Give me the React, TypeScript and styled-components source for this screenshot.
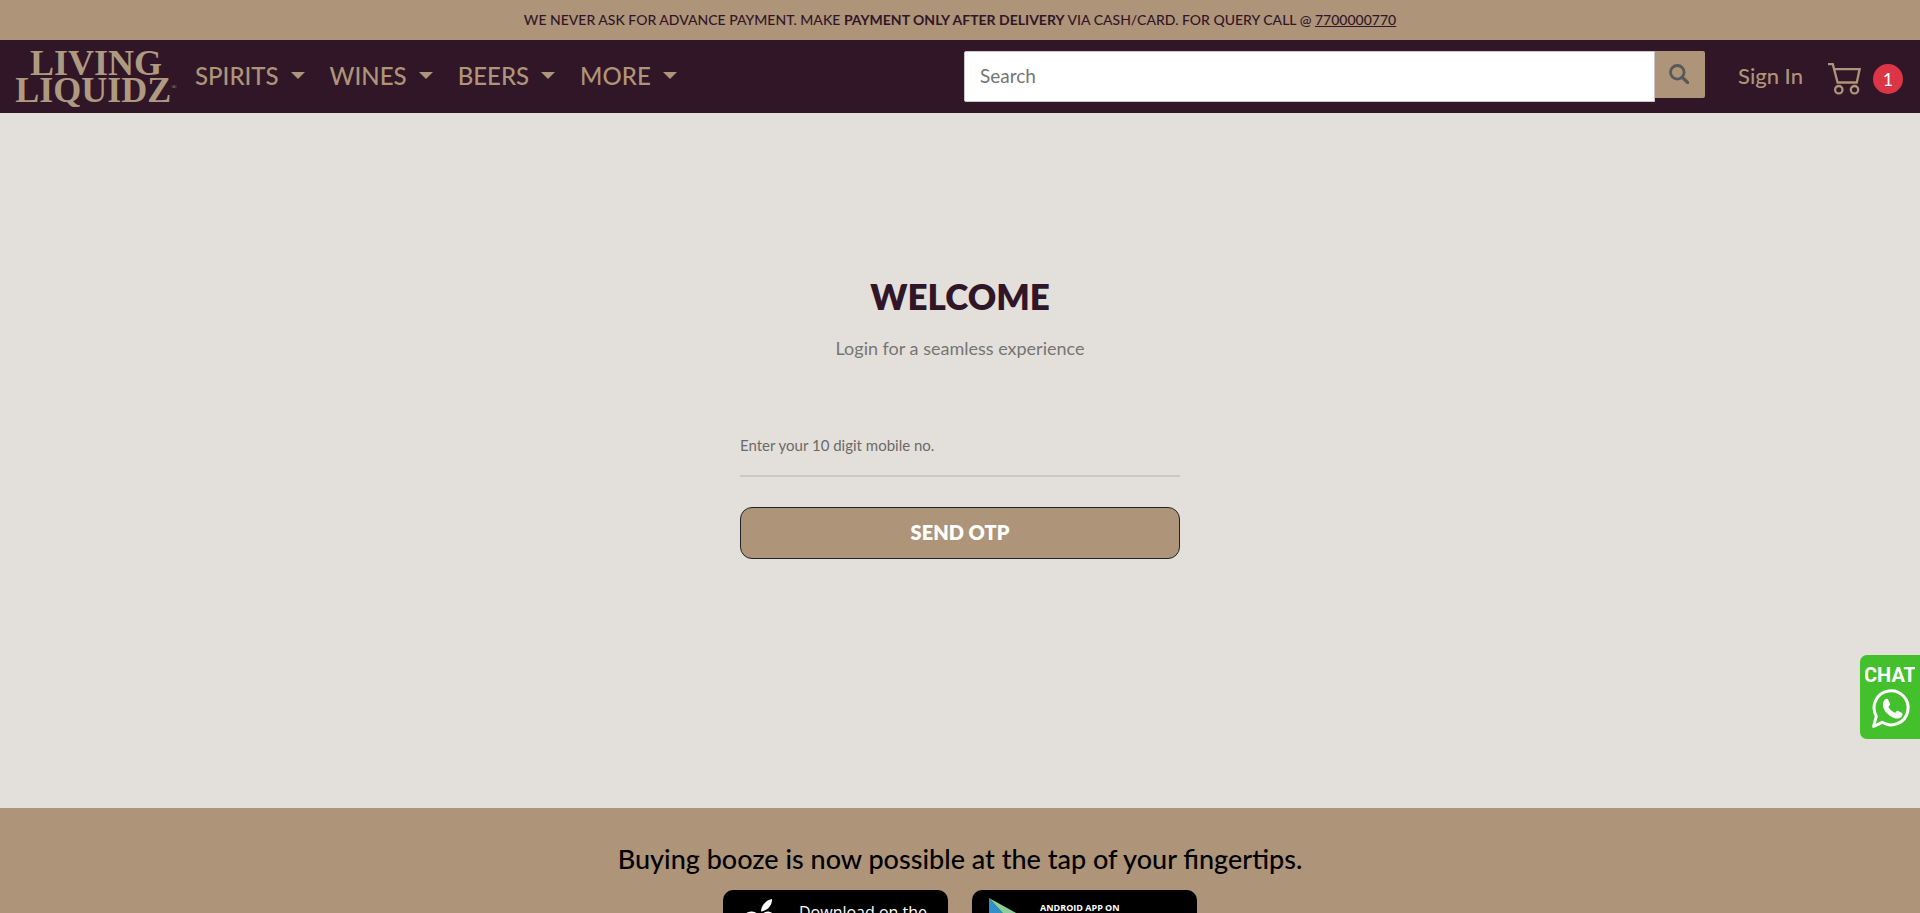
import React from 'react';
import styled, { createGlobalStyle } from 'styled-components';

const plum = '#311628';
const tan = '#ae9478';
const sand = '#e3e0db';

const GlobalStyle = createGlobalStyle`
  *, *::before, *::after { box-sizing: border-box; }
  body {
    margin: 0;
    background: ${sand};
    font-family: Lato, "Open Sans", sans-serif;
    font-size: 16px;
    color: #212529;
  }
  button, input { font-family: inherit; }
`;

const Page = styled.div`
  display: flex;
  flex-direction: column;
  height: 100vh;
  overflow: hidden;
`;

const Notice = styled.p`
  flex: none;
  margin: 0;
  padding: 0 16px;
  background: ${tan};
  color: ${plum};
  font-size: 14px;
  font-weight: 500;
  line-height: 40px;
  text-align: center;
`;

const NoticeLink = styled.a`
  color: inherit;
  text-decoration: underline;
`;

const Header = styled.header`
  flex: none;
  display: flex;
  align-items: center;
  height: 73px;
  padding: 0 17px 0 15px;
  background: ${plum};
  color: ${tan};
`;

const Logo = styled.a`
  display: flex;
  flex-direction: column;
  align-items: center;
  width: 162px;
  margin-right: 18px;
  color: #ae9a80;
  font: bold 36px/27px "Liberation Serif", serif;
  text-decoration: none;
`;

const LogoLine = styled.span`
  display: flex;
  white-space: nowrap;
`;

const Registered = styled.sup`
  font-size: 7px;
  font-weight: 400;
  line-height: 20px;
  vertical-align: baseline;
`;

const Menu = styled.nav`
  display: flex;
  gap: 25px;
`;

const MenuButton = styled.button`
  display: flex;
  align-items: center;
  gap: 12px;
  padding: 0 0 2px;
  border: 0;
  background: none;
  color: inherit;
  font-size: 24px;
  font-weight: 500;
  line-height: 36px;

  &::after {
    content: '';
    border-top: 7px solid;
    border-right: 7px solid transparent;
    border-left: 7px solid transparent;
  }
`;

const Search = styled.form`
  display: flex;
  align-items: flex-start;
  width: 741px;
  margin-left: auto;
`;

const SearchInput = styled.input`
  flex: 1;
  min-width: 0;
  height: 51px;
  padding: 0 15px 2px;
  border: 1px solid #cfc6cd;
  border-radius: 2px 0 0 2px;
  background: #fff;
  font-size: 19px;
  color: #495057;

  &::placeholder { color: #757575; opacity: 1; }
`;

const SearchButton = styled.button`
  display: flex;
  align-items: center;
  justify-content: center;
  width: 50px;
  height: 47px;
  padding: 0 2px 2px 0;
  border: 0;
  border-radius: 0 2px 2px 0;
  background: ${tan};
  color: #595959;
`;

const SignIn = styled.a`
  margin: 0 25px 0 33px;
  padding-bottom: 2px;
  color: inherit;
  font-size: 22px;
  font-weight: 500;
  text-decoration: none;
`;

const Cart = styled.a`
  display: flex;
  align-items: center;
  gap: 12px;
  padding-top: 4px;
  color: inherit;
  text-decoration: none;
`;

const Count = styled.span`
  width: 30px;
  height: 30px;
  border-radius: 50%;
  background: #dc3545;
  color: #fff;
  font-size: 18px;
  line-height: 30px;
  text-align: center;
`;

const Main = styled.main`
  flex: none;
  display: flex;
  justify-content: center;
  min-height: 695px;
  padding: 159px 16px 0;
  background: ${sand};
`;

const LoginForm = styled.form`
  display: flex;
  flex-direction: column;
  width: 440px;
  max-width: 100%;
`;

const Title = styled.h1`
  margin: 0;
  color: ${plum};
  font-size: 35px;
  font-weight: 800;
  line-height: 48px;
  text-align: center;
`;

const Subtitle = styled.p`
  margin: 14px 0 62px;
  color: #757575;
  font-size: 18px;
  line-height: 28px;
  text-align: center;
`;

const PhoneInput = styled.input`
  height: 53px;
  margin-bottom: 30px;
  padding: 0 0 9px;
  border: 0;
  border-bottom: 2px solid #cbc8c3;
  background: transparent;
  font-size: 15px;
  color: #495057;

  &::placeholder { color: #6c6a68; opacity: 1; }
`;

const SubmitButton = styled.button`
  height: 52px;
  padding: 0 0 2px;
  border: 1px solid #212529;
  border-radius: 12px;
  background: ${tan};
  color: #fff;
  font-size: 20px;
  font-weight: 800;
`;

const Footer = styled.footer`
  flex: none;
  padding: 33px 16px 40px;
  background: ${tan};
`;

const Tagline = styled.h2`
  margin: 0 0 13px;
  color: #000;
  font-size: 27px;
  font-weight: 500;
  line-height: 36px;
  text-align: center;
`;

const Stores = styled.div`
  display: flex;
  justify-content: center;
  gap: 24px;
`;

const StoreLink = styled.a`
  display: flex;
  align-items: flex-start;
  width: 225px;
  height: 68px;
  padding: 8px 16px;
  border-radius: 10px;
  background: #000;
  color: #fff;
  text-decoration: none;
`;

const StoreText = styled.span<{ $inset: number }>`
  display: flex;
  flex-direction: column;
  margin-left: ${(p) => p.$inset}px;
  font-family: "Open Sans", sans-serif;
`;

const AppleLead = styled.span`
  font-size: 16px;
  line-height: 28px;
`;

const AndroidLead = styled.span`
  font-size: 9px;
  font-weight: 700;
  line-height: 20px;
`;

const StoreName = styled.span`
  font-size: 22px;
  line-height: 28px;
`;

const Chat = styled.a`
  position: fixed;
  right: 0;
  top: 655px;
  display: flex;
  flex-direction: column;
  align-items: center;
  width: 60px;
  height: 84px;
  padding-top: 7px;
  border-radius: 7px 0 0 7px;
  background: #43c02b;
`;

const menus = ['SPIRITS', 'WINES', 'BEERS', 'MORE'];

const SearchIcon = () => (
  <svg width="20" height="20" viewBox="0 0 20 20" fill="none" stroke="currentColor" aria-hidden="true">
    <circle cx="8.3" cy="8.3" r="6.8" strokeWidth="2.8" />
    <path d="M13.3 13.3 18.6 18.6" strokeWidth="3.4" strokeLinecap="round" />
  </svg>
);

const CartIcon = () => (
  <svg width="33" height="32" viewBox="0 0 33 32" fill="none" stroke="currentColor" strokeWidth="2.3" aria-hidden="true">
    <path d="M0 1.2H4.8L9.6 19.5H28.8L31.6 6.2H6.3" />
    <circle cx="10.8" cy="26.7" r="3.7" />
    <circle cx="26.5" cy="26.7" r="3.7" />
  </svg>
);

const ChatArt = () => (
  <svg width="50" height="70" viewBox="0 0 50 70" fill="#fff" aria-hidden="true">
    <text
      x="25"
      y="20"
      textAnchor="middle"
      fontFamily="'Liberation Sans Narrow', Roboto, sans-serif"
      fontSize="20"
      fontWeight="700"
    >
      CHAT
    </text>
    <path
      d="M11.3 54.2A17 17 0 1 1 17.2 60.3L8.6 64.4Z"
      fill="none"
      stroke="#fff"
      strokeWidth="3"
      strokeLinejoin="round"
    />
    <path d="M19.5 38c1.300-1.600 3-1.500 3.700-.2l1.700 3.700c.4 1-.1 1.700-1.500 3.200 1.500 3 3.600 4.900 6.800 6.200 1.400-1.800 2-2.300 3-1.900l3.500 1.800c1.300.7.9 2.700-.2 4-2.500 2.800-6.700 2.200-11.300-.8-4.500-3-7.200-7.300-7.300-11 0-2 .5-3.700 1.600-5z" />
  </svg>
);

const AppleIcon = () => (
  <svg width="40" height="48" viewBox="0 0 40 48" fill="#fff" aria-hidden="true">
    <path d="M33 1c.5 6-4.500 12-11 12.500C22 8 27 2 33 1z" />
    <path d="M21 16.500c-2 0-4.500-3-8-3C7 13.500 2 18 2 26c0 9 6 18 11 18 2.500 0 4-1.500 7-1.500s4 1.500 6.500 1.500c4 0 8-6 9.500-11-6-2.500-7-12-.5-15.500-2-2.600-4-4-7-4-3 0-5.500 3-7.500 3z" />
  </svg>
);

const PlayIcon = () => (
  <svg width="42" height="48" viewBox="0 0 42 48" aria-hidden="true">
    <path d="M1 0V46L22 23Z" fill="#2f8fc6" />
    <path d="M1 0 30 16 22 23Z" fill="#8ccf9c" />
    <path d="M30 16 41 23 30 30 22 23Z" fill="#f4c645" />
    <path d="M1 46 30 30 22 23Z" fill="#d9483f" />
  </svg>
);

export default function App() {
  return (
    <Page>
      <GlobalStyle />
      <Notice>
        WE NEVER ASK FOR ADVANCE PAYMENT. MAKE <strong>PAYMENT ONLY AFTER DELIVERY</strong> VIA
        CASH/CARD. FOR QUERY CALL @ <NoticeLink href="tel:7700000770">7700000770</NoticeLink>
      </Notice>
      <Header>
        <Logo href="/">
          <LogoLine>LIVING</LogoLine>
          <LogoLine>
            LIQUIDZ<Registered>®</Registered>
          </LogoLine>
        </Logo>
        <Menu>
          {menus.map((name) => (
            <MenuButton key={name} type="button">
              {name}
            </MenuButton>
          ))}
        </Menu>
        <Search role="search" onSubmit={(e) => e.preventDefault()}>
          <SearchInput type="search" placeholder="Search" aria-label="Search" />
          <SearchButton type="submit" aria-label="Search">
            <SearchIcon />
          </SearchButton>
        </Search>
        <SignIn href="/login">Sign In</SignIn>
        <Cart href="/cart" aria-label="Cart, 1 item">
          <CartIcon />
          <Count>1</Count>
        </Cart>
      </Header>
      <Main>
        <LoginForm onSubmit={(e) => e.preventDefault()}>
          <Title>WELCOME</Title>
          <Subtitle>Login for a seamless experience</Subtitle>
          <PhoneInput
            type="tel"
            maxLength={10}
            placeholder="Enter your 10 digit mobile no."
            aria-label="Enter your 10 digit mobile no."
          />
          <SubmitButton type="submit">SEND OTP</SubmitButton>
        </LoginForm>
      </Main>
      <Footer>
        <Tagline>Buying booze is now possible at the tap of your fingertips.</Tagline>
        <Stores>
          <StoreLink href="#app-store">
            <AppleIcon />
            <StoreText $inset={20}>
              <AppleLead>Download on the</AppleLead>
              <StoreName>App Store</StoreName>
            </StoreText>
          </StoreLink>
          <StoreLink href="#play-store">
            <PlayIcon />
            <StoreText $inset={10}>
              <AndroidLead>ANDROID APP ON</AndroidLead>
              <StoreName>Google Play</StoreName>
            </StoreText>
          </StoreLink>
        </Stores>
      </Footer>
      <Chat href="#chat" aria-label="Chat on WhatsApp">
        <ChatArt />
      </Chat>
    </Page>
  );
}
